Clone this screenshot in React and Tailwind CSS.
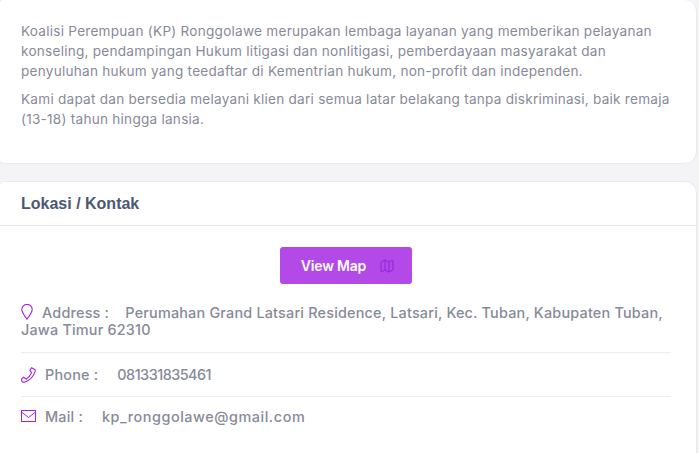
import React from 'react';
import { Map } from 'lucide-react';

function PinIcon() {
  return (
    <svg width="12" height="16" viewBox="0 0 12 16" fill="none" stroke="#a020f0" strokeWidth="1.1" className="shrink-0 inline-block align-[-2px]">
      <path d="M6 15.2C3.6 11.6 .8 8.6 .8 5.6A5.2 5.2 0 0 1 11.2 5.6C11.2 8.6 8.4 11.6 6 15.2Z" />
    </svg>
  );
}

function PhoneIcon() {
  return (
    <svg width="15" height="16" viewBox="0 0 15 16" fill="none" stroke="#a020f0" strokeWidth="1.1" className="shrink-0">
      <path d="M10.6.7 L13.6 2.4 C14.3 2.9 14.5 3.4 14.2 4.2 C12.6 9.4 8.6 13.6 3.8 15 C2.4 15.4 1.2 15 .7 13.9 C.4 13.2 .6 12.4 1.2 11.4 L2.6 10.3 L5.3 12.1 C7.6 10.6 9.4 8.3 10.5 5.6 L8.9 3.2 Z" />
    </svg>
  );
}

function MailIcon() {
  return (
    <svg width="15" height="12" viewBox="0 0 15 12" fill="none" stroke="#a020f0" strokeWidth="1" className="shrink-0">
      <rect x=".5" y=".5" width="14" height="11" />
      <path d="M.5 2 7.5 7.5 14.5 2" />
    </svg>
  );
}

function Card({ className, children }) {
  return (
    <div className={`bg-white border border-[#e9e9f1] rounded-r-xl rounded-l-[4px] -ml-px ${className}`}>
      {children}
    </div>
  );
}

export default function App() {
  return (
    <div className="h-[453px] overflow-hidden bg-[#f4f4f6] pr-[2px] font-['Inter',sans-serif] text-[#878a99]">
      <Card className="-mt-px pt-[21px] px-[21px] pb-[34px]">
        <p className="text-[13.6px] leading-5 tracking-[0.24px] mb-2">
          Koalisi Perempuan (KP) Ronggolawe merupakan lembaga layanan yang memberikan pelayanan konseling, pendampingan Hukum litigasi dan nonlitigasi, pemberdayaan masyarakat dan penyuluhan hukum yang teedaftar di Kementrian hukum, non-profit dan independen.
        </p>
        <p className="text-[13.6px] leading-5 tracking-[0.24px]">
          Kami dapat dan bersedia melayani klien dari semua latar belakang tanpa diskriminasi, baik remaja (13-18) tahun hingga lansia.
        </p>
      </Card>

      <Card className="mt-[17px] rounded-t-xl pb-[40px]">
        <div className="h-[44px] px-[21px] flex items-center border-b border-[#e9e9f1]">
          <h3 className="font-['Liberation_Sans',sans-serif] font-bold text-[16px] text-[#4d5875]">Lokasi / Kontak</h3>
        </div>
        <div className="pl-[21px] pr-[25px] pt-[21px]">
          <div className="flex justify-center mb-[20px]">
            <button className="w-[132px] h-[37px] pl-[4px] rounded-[3px] bg-[#b349e6] text-white text-[14px] font-semibold tracking-[-0.2px] flex items-center justify-center gap-[13px]">
              View Map
              <Map size={16} strokeWidth={1.4} color="#8a1fe0" />
            </button>
          </div>
          <div className="w-[650px] text-[14.4px] font-medium leading-[17px] tracking-[0.2px]">
            <div className="pb-[14px] border-b border-[#ececf2]">
              <PinIcon />
              <span className="ml-[9px]">Address :{'\u00a0\u00a0\u00a0\u00a0'}Perumahan Grand Latsari Residence, Latsari, Kec. Tuban, Kabupaten Tuban, Jawa Timur 62310</span>
            </div>
            <div className="h-[44px] flex items-center border-b border-[#ececf2]">
              <PhoneIcon /><span className="ml-[9px]">Phone :</span><span className="ml-[19px] tracking-[-0.5px]">081331835461</span>
            </div>
            <div className="h-[38px] flex items-center">
              <MailIcon /><span className="ml-[9px]">Mail :</span><span className="ml-[19px] tracking-[0.55px]">kp_ronggolawe@gmail.com</span>
            </div>
          </div>
        </div>
      </Card>
    </div>
  );
}
